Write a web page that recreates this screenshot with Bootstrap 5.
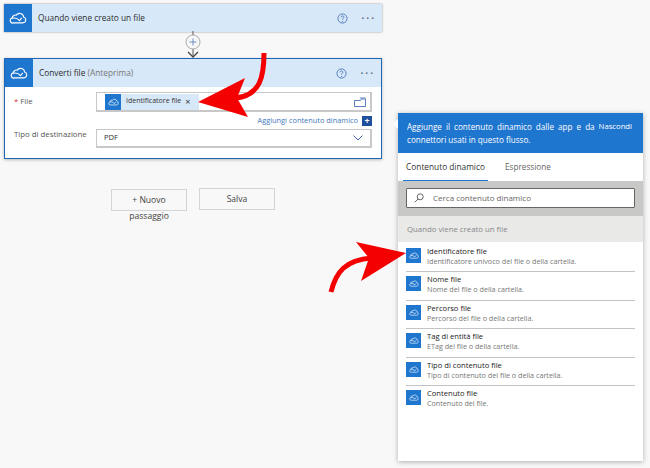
<!DOCTYPE html>
<html lang="it">
<head>
<meta charset="utf-8">
<title>Converti file</title>
<link href="https://cdn.jsdelivr.net/npm/bootstrap@5.3.0/dist/css/bootstrap.min.css" rel="stylesheet">
<style>
html,body{width:650px;height:468px;overflow:hidden}
body{background:#f8f8f8;font-family:"Open Sans","Noto Sans",sans-serif;font-size:8.5px;color:#333;position:relative}
.flow-col{width:382px;padding:4px 0 0 4px}
.step-head{height:28px;background:#d7e8f8}
.step-one{box-shadow:0 0 2px rgba(0,0,0,.4)}
.step-ico{width:28px;background:#1f76cf}
.step-two{height:101px;border:1px solid #1b67b5;background:#fff;box-shadow:0 1px 3px rgba(0,0,0,.25)}
.step-title{font-size:8.3px;color:#2d2d2d;padding-left:6px}
.step-note{color:#777}
.head-tools{gap:13px;padding-right:6px}
.dots{letter-spacing:2px;font-size:10px;font-weight:700;color:#5e6f88}
.conn{height:26px;position:relative}
.conn svg{position:absolute;left:177px;top:-1px}
.field-row{padding:5px 9px 0}
.field-name{width:82px;font-size:7.8px;color:#555}
.req{color:#d13438}
.field-box{width:276px;border:1px solid #c8c8c8;border-width:1px 2px 2px 1px;background:#fff}
.box-file{height:20px;padding-left:8px}
.token{height:16px;width:94px;background:#d7e8f8;font-size:7px;color:#333}
.token-ico{width:16px;height:16px;background:#1f76cf}
.token-txt{padding-left:5px;white-space:nowrap}
.token-x{margin-left:4px;font-size:9px;line-height:1}
.box-sel{height:19px;padding:0 7px;font-size:7.6px;color:#333}
.add-dyn{width:276px;height:17px;gap:4px;color:#3f78b8;font-size:7.4px;margin-left:82px}
.add-plus{width:10px;height:10px;background:#1e4f9c;color:#fff;font-size:9px;line-height:10px;text-align:center;font-weight:700}
.btn-row{padding:29px 0 0 107px;gap:12px;align-items:flex-start}
.flat-btn{width:76px;background:#f8f8f8;border:1px solid #d4d4d4;font-size:8.6px;color:#444;text-align:center;border-radius:0}
.btn-new{height:22px;line-height:16px;padding-top:2px;margin-top:1px}
.btn-save{height:22px;line-height:20px}
.dyn-panel{position:absolute;left:398px;top:113px;width:245px;height:348px;background:#fff;box-shadow:0 1px 5px rgba(0,0,0,.3)}
.dyn-panel::before{content:"";position:absolute;left:-5px;top:6px;border:5px solid transparent;border-left:0;border-right-color:#fff}
.dyn-top{height:40px;background:#1f76cf;color:#fff;padding:7px 11px 0 9px;font-size:8.1px;line-height:13px;text-align:justify}
.hide-link{float:right;font-size:7.7px;margin-left:4px}
.tab-row{height:28px;padding-left:5px}
.tab-one{height:28px;line-height:27px;font-size:8.3px;color:#333;border-bottom:1px solid #1f76cf;width:85px;text-align:center;white-space:nowrap}
.tab-two{margin-left:17px;line-height:27px;font-size:8.2px;color:#666}
.srch-wrap{height:35px;background:#c8c8c6;padding:7px 8px 0}
.srch-box{height:20px;background:#fff;border:1px solid #666;font-size:8px;color:#666;padding-left:7px;gap:9px;border-radius:1px}
.sect{height:26px;line-height:26px;background:#e9e9e8;color:#888;font-size:7.8px;padding-left:9px}
.dyn-list{padding:2px 8px 0}
.dyn-item{height:28.4px;border-bottom:1px solid #c4c4c4;padding-top:2px;gap:6px;background:transparent;border-radius:0;border-left:0;border-right:0;border-top:0}
.dyn-item.last{border-bottom:0}
.item-ico{width:15px;height:15px;background:#1f76cf;margin-top:2px}
.item-t{font-size:7.6px;line-height:10px;color:#222}
.item-d{font-size:7.2px;line-height:10px;color:#777;white-space:nowrap}
.red-over{position:absolute;left:0;top:0;pointer-events:none}
</style>
</head>
<body>
<svg width="0" height="0" class="d-block position-absolute">
<symbol id="cloud" viewBox="0 0 24 16"><path d="M6 14.5h12.5a4 4 0 0 0 1-7.8A5.5 5.5 0 0 0 9.6 4.2 4.6 4.6 0 0 0 4 8.2a3.2 3.2 0 0 0 2 6.3zM4.5 8.4c4-1 7 .3 9.5 3l3-3.7" fill="none" stroke="currentColor" stroke-width="1.5"/></symbol>
<symbol id="help" viewBox="0 0 12 12"><circle cx="6" cy="6" r="5" fill="none" stroke="#4a74b8"/><path d="M4.5 4.7a1.5 1.5 0 1 1 2.3 1.3c-.6.4-.8.6-.8 1.2" fill="none" stroke="#4a74b8"/><circle cx="6" cy="9" r=".6" fill="#4a74b8"/></symbol>
</svg>

<div class="flow-col">
  <div class="step-head step-one d-flex align-items-center">
    <div class="step-ico h-100 d-flex align-items-center justify-content-center text-white"><svg width="18" height="12"><use href="#cloud"/></svg></div>
    <div class="step-title flex-grow-1">Quando viene creato un file</div>
    <div class="head-tools d-flex align-items-center"><svg width="11" height="11"><use href="#help"/></svg><span class="dots">···</span></div>
  </div>
  <div class="conn">
    <svg width="24" height="28" viewBox="0 0 24 28"><path d="M12 0v4M12 18v8" stroke="#555" fill="none"/><circle cx="12" cy="11" r="7" fill="#f8f8f8" stroke="#aaa"/><path d="M12 7.500v7M8.500 11h7" stroke="#6f8fc4" fill="none"/><path d="M7 21l5 5 5-5" stroke="#444" stroke-width="1.300" fill="none"/></svg>
  </div>
  <div class="step-two">
    <div class="step-head d-flex align-items-center">
      <div class="step-ico h-100 d-flex align-items-center justify-content-center text-white"><svg width="18" height="12"><use href="#cloud"/></svg></div>
      <div class="step-title flex-grow-1">Converti file <span class="step-note">(Anteprima)</span></div>
      <div class="head-tools d-flex align-items-center"><svg width="11" height="11"><use href="#help"/></svg><span class="dots">···</span></div>
    </div>
    <div class="field-row">
      <div class="d-flex">
        <div class="field-name pt-1"><span class="req">*</span> File</div>
        <div class="field-box box-file d-flex align-items-center justify-content-between">
          <div class="token d-flex align-items-center"><span class="token-ico d-flex align-items-center justify-content-center text-white"><svg width="11" height="8"><use href="#cloud"/></svg></span><span class="token-txt">Identificatore file</span><span class="token-x">×</span></div>
          <svg class="me-1" width="12" height="10" viewBox="0 0 12 10"><path d="M.5 3.500h6l1-1.500h4v7.500H.5z" fill="none" stroke="#5b7fc0"/><path d="M6 1h5.500" stroke="#5b7fc0"/></svg>
        </div>
      </div>
      <div class="add-dyn d-flex align-items-center justify-content-end"><span>Aggiungi contenuto dinamico</span><span class="add-plus">+</span></div>
      <div class="d-flex">
        <div class="field-name">Tipo di destinazione</div>
        <div class="field-box box-sel d-flex align-items-center justify-content-between"><span>PDF</span><svg width="10" height="6" viewBox="0 0 10 6"><path d="M.5.500l4.500 4.500 4.500-4.500" fill="none" stroke="#3f63b0"/></svg></div>
      </div>
    </div>
  </div>
  <div class="btn-row d-flex">
    <div class="flat-btn btn-new">+ Nuovo passaggio</div>
    <div class="flat-btn btn-save">Salva</div>
  </div>
</div>

<aside class="dyn-panel">
  <div class="dyn-top"><span class="hide-link">Nascondi</span>Aggiunge il contenuto dinamico dalle app e da connettori usati in questo flusso.</div>
  <div class="tab-row d-flex">
    <div class="tab-one">Contenuto dinamico</div>
    <div class="tab-two">Espressione</div>
  </div>
  <div class="srch-wrap">
    <div class="srch-box d-flex align-items-center">
      <svg width="10" height="10" viewBox="0 0 10 10"><circle cx="6.200" cy="3.800" r="3" fill="none" stroke="#666"/><path d="M4 6L.8 9.200" stroke="#666"/></svg>
      <span>Cerca contenuto dinamico</span>
    </div>
  </div>
  <div class="sect">Quando viene creato un file</div>
  <div class="dyn-list list-group">
    <div class="dyn-item d-flex"><span class="item-ico d-flex align-items-center justify-content-center text-white"><svg width="10" height="7"><use href="#cloud"/></svg></span><div><div class="item-t">Identificatore file</div><div class="item-d">Identificatore univoco del file o della cartella.</div></div></div>
    <div class="dyn-item d-flex"><span class="item-ico d-flex align-items-center justify-content-center text-white"><svg width="10" height="7"><use href="#cloud"/></svg></span><div><div class="item-t">Nome file</div><div class="item-d">Nome del file o della cartella.</div></div></div>
    <div class="dyn-item d-flex"><span class="item-ico d-flex align-items-center justify-content-center text-white"><svg width="10" height="7"><use href="#cloud"/></svg></span><div><div class="item-t">Percorso file</div><div class="item-d">Percorso del file o della cartella.</div></div></div>
    <div class="dyn-item d-flex"><span class="item-ico d-flex align-items-center justify-content-center text-white"><svg width="10" height="7"><use href="#cloud"/></svg></span><div><div class="item-t">Tag di entità file</div><div class="item-d">ETag del file o della cartella.</div></div></div>
    <div class="dyn-item d-flex"><span class="item-ico d-flex align-items-center justify-content-center text-white"><svg width="10" height="7"><use href="#cloud"/></svg></span><div><div class="item-t">Tipo di contenuto file</div><div class="item-d">Tipo di contenuto del file o della cartella.</div></div></div>
    <div class="dyn-item last d-flex"><span class="item-ico d-flex align-items-center justify-content-center text-white"><svg width="10" height="7"><use href="#cloud"/></svg></span><div><div class="item-t">Contenuto file</div><div class="item-d">Contenuto del file.</div></div></div>
  </div>
</aside>

<svg class="red-over" width="650" height="468" viewBox="0 0 650 468">
  <path d="M264 53C264 75 261 96 235 98" fill="none" stroke="#f40000" stroke-width="5"/>
  <path d="M198 102L245 78L237 98L248 117Z" fill="#f40000"/>
  <path d="M331 292C336 272 345 260 372 258" fill="none" stroke="#f40000" stroke-width="5"/>
  <path d="M406 253L356 242L369 258L361 281Z" fill="#f40000"/>
</svg>
<script src="https://cdn.jsdelivr.net/npm/bootstrap@5.3.0/dist/js/bootstrap.bundle.min.js"></script>
</body>
</html>
